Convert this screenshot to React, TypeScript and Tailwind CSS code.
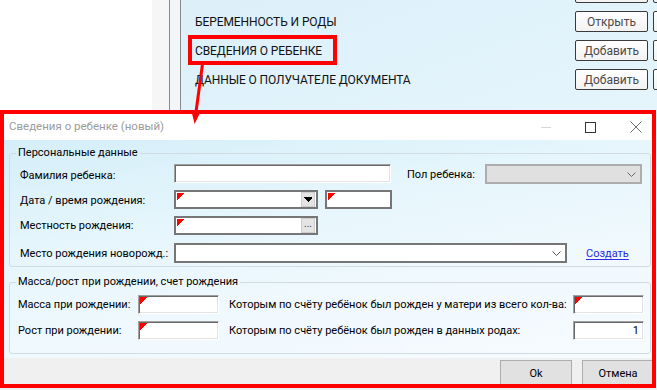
import React from "react";

const RedCorner = () => (
  <svg className="absolute left-[1px] top-[1px]" width="7" height="7" viewBox="0 0 7 7" shapeRendering="crispEdges">
    <path d="M0 0H7L0 7Z" fill="#ff0000" />
  </svg>
);

const Sunken = ({ className, children }: { className: string; children?: React.ReactNode }) => (
  <div
    className={
      "relative bg-white border border-t-[#a0a0a0] border-l-[#a0a0a0] border-r-[#ffffff] border-b-[#ffffff] shadow-[inset_1px_1px_0_#696969,inset_-1px_-1px_0_#e3e3e3] " +
      className
    }
  >
    {children}
  </div>
);

const Flat = ({ className, children }: { className: string; children?: React.ReactNode }) => (
  <div className={"relative bg-white border-2 border-[#767676] flex items-center justify-end " + className}>{children}</div>
);

const Chevron = ({ color }: { color: string }) => (
  <svg width="9" height="5" viewBox="0 0 9 5">
    <path d="M0.5 0.5L4.5 4.5L8.5 0.5" fill="none" stroke={color} strokeWidth="1" />
  </svg>
);

const TopButton = ({ label }: { label: string }) => (
  <div className="w-[73px] h-[21px] shrink-0 border border-[#3a3a3a] rounded-[2px] bg-[linear-gradient(#ffffff,#f2f2f2)] flex items-center justify-center text-[#4a4a4a] text-[12px]">
    {label}
  </div>
);

const rows = ["", "БЕРЕМЕННОСТЬ И РОДЫ", "СВЕДЕНИЯ О РЕБЕНКЕ", "ДАННЫЕ О ПОЛУЧАТЕЛЕ ДОКУМЕНТА"];
const btns = ["", "Открыть", "Добавить", "Добавить"];

export default function App() {
  return (
    <div className="relative w-[657px] h-[390px] overflow-hidden bg-[#f0f0f0] [font-family:Roboto,'Noto_Sans',sans-serif] text-[12px] leading-none text-black whitespace-nowrap">
      {/* background app */}
      <div className="flex h-[388px]">
        <div className="w-[152px] bg-white" />
        <div className="w-[17px] bg-[#f6f6f6]" />
        <div className="w-px bg-[#8a8a8a]" />
        <div className="w-[10px] bg-[#f3f6f8]" />
        <div className="w-px bg-[#8a8a8a]" />
        <div className="flex-1 bg-[linear-gradient(160deg,#dcf0fa_0%,#e6f5fc_55%,#f1f9fd_100%)] overflow-hidden">
          <div className="flex flex-col gap-[8px] -mt-[18px] pl-[14px]">
            {rows.map((r, i) => (
              <div key={i} className="flex items-center h-[21px]">
                <div className="w-[380px] shrink-0 text-[12px] tracking-[-0.1px] text-[#111]">{r}</div>
                <TopButton label={btns[i]} />
                <div className="ml-[5px]">
                  <TopButton label="" />
                </div>
              </div>
            ))}
          </div>
        </div>
      </div>

      {/* dialog window */}
      <div className="absolute left-0 top-[110px] w-[656px] h-[278px] border-[4px] border-[#ff0000] bg-white flex flex-col overflow-hidden text-[11px]">
        {/* title bar */}
        <div className="h-[26px] shrink-0 bg-white flex items-center pl-[5px] pr-[10px]">
          <div className="flex-1 text-[#9b9b9b] text-[11.5px]">Сведения о ребенке (новый)</div>
          <div className="w-[10px] h-px bg-[#d6d6d6]" />
          <div className="ml-[34px] w-[11px] h-[11px] border border-[#333]" />
          <svg className="ml-[34px]" width="12" height="12" viewBox="0 0 12 12">
            <path d="M0.5 0.5L11.5 11.5M11.5 0.5L0.5 11.5" stroke="#6f6f6f" strokeWidth="1" />
          </svg>
        </div>

        {/* body */}
        <div className="h-[218px] shrink-0 bg-[linear-gradient(170deg,#d4eef9_0%,#e6f6fc_35%,#f1f9fe_70%,#f6fbfe_100%)] pt-[5px]">
          <fieldset className="ml-[5px] w-[642px] border border-[#d2dbe1] rounded-[3px] pt-[3px] pb-[3px]">
            <legend className="ml-[6px] px-[2px] leading-[16px] h-[16px]">Персональные данные</legend>
            {/* row 1 */}
            <div className="flex items-center h-[20px] pl-[10px]">
              <div className="w-[154px] shrink-0 pt-[2px]">Фамилия ребенка:</div>
              <Sunken className="w-[217px] h-[19px] self-start" />
              <div className="ml-[16px] w-[78px] shrink-0 pt-[1px]">Пол ребенка:</div>
              <div className="w-[157px] h-[20px] bg-[#e0e0e0] border-2 border-[#adadad] flex items-center justify-end pr-[4px]">
                <Chevron color="#6a6a6a" />
              </div>
            </div>
            {/* row 2 */}
            <div className="flex items-center h-[19px] mt-[6px] pl-[10px]">
              <div className="w-[154px] shrink-0 pt-[2px]">Дата / время рождения:</div>
              <Flat className="w-[144px] h-[19px] pr-px">
                <RedCorner />
                <div className="w-[14px] h-[15px] bg-[#e4e4e4] border border-[#cdcdcd] flex items-center justify-center">
                  <svg width="8" height="5" viewBox="0 0 8 5" shapeRendering="crispEdges">
                    <path d="M0 0H8V1L4 5L0 1Z" fill="#000" />
                  </svg>
                </div>
              </Flat>
              <Flat className="ml-[7px] w-[67px] h-[19px]">
                <RedCorner />
              </Flat>
            </div>
            {/* row 3 */}
            <div className="flex items-center h-[19px] mt-[7px] pl-[10px]">
              <div className="w-[154px] shrink-0">Местность рождения:</div>
              <Flat className="w-[144px] h-[19px] pr-px">
                <RedCorner />
                <div className="w-[14px] h-[15px] bg-[#e4e4e4] border border-[#cdcdcd] flex items-end justify-center pb-[3px] text-[10px] leading-none text-[#335]">
                  ...
                </div>
              </Flat>
            </div>
            {/* row 4 */}
            <div className="flex items-center h-[20px] mt-[8px] pl-[10px]">
              <div className="w-[154px] shrink-0">Место рождения новорожд.:</div>
              <Flat className="w-[393px] h-[20px] pr-[4px]">
                <Chevron color="#555" />
              </Flat>
              <span className="ml-[19px] text-[#2a2ae8] underline underline-offset-2">Создать</span>
            </div>
          </fieldset>

          <fieldset className="ml-[5px] mt-[7px] w-[642px] border border-[#d2dbe1] rounded-[3px] pt-[5px] pb-[13px]">
            <legend className="ml-[6px] px-[2px] leading-[16px] h-[16px]">Масса/рост при рождении, счет рождения</legend>
            <div className="flex items-center h-[19px] pl-[8px] pr-[6px]">
              <div className="w-[120px] shrink-0">Масса при рождении:</div>
              <Sunken className="w-[81px] h-[19px]">
                <RedCorner />
              </Sunken>
              <div className="ml-[10px] flex-1">Которым по счёту ребёнок был рожден у матери из всего кол-ва:</div>
              <Sunken className="w-[71px] h-[19px]">
                <RedCorner />
              </Sunken>
            </div>
            <div className="flex items-center h-[19px] mt-[7px] pl-[8px] pr-[6px]">
              <div className="w-[120px] shrink-0">Рост при рождении:</div>
              <Sunken className="w-[81px] h-[19px]">
                <RedCorner />
              </Sunken>
              <div className="ml-[10px] flex-1">Которым по счёту ребёнок был рожден в данных родах:</div>
              <Sunken className="w-[71px] h-[19px] flex items-center justify-end pr-[4px]">
                <span>1</span>
              </Sunken>
            </div>
          </fieldset>
        </div>

        {/* bottom bar */}
        <div className="h-[26px] shrink-0 bg-[#f0f0f0] flex pl-[496px] pt-[2px] gap-[10px] overflow-hidden">
          <div className="w-[72px] h-[26px] shrink-0 bg-[#e1e1e1] border border-[#adadad] flex items-center justify-center">Ok</div>
          <div className="w-[72px] h-[26px] shrink-0 bg-[#e1e1e1] border border-[#adadad] flex items-center justify-center">Отмена</div>
        </div>
      </div>

      {/* annotation: highlight box */}
      <div className="absolute left-[188px] top-[35px] w-[149px] h-[30px] border-[4px] border-[#ff0000]" />
      {/* annotation: arrow */}
      <svg className="absolute left-0 top-0 pointer-events-none" width="657" height="390" viewBox="0 0 657 390">
        <line x1="202.5" y1="64" x2="196" y2="112" stroke="#ff0000" strokeWidth="3" />
        <path d="M191.3 110.4L200.7 111.6L194.6 124Z" fill="#ff0000" />
      </svg>
    </div>
  );
}
